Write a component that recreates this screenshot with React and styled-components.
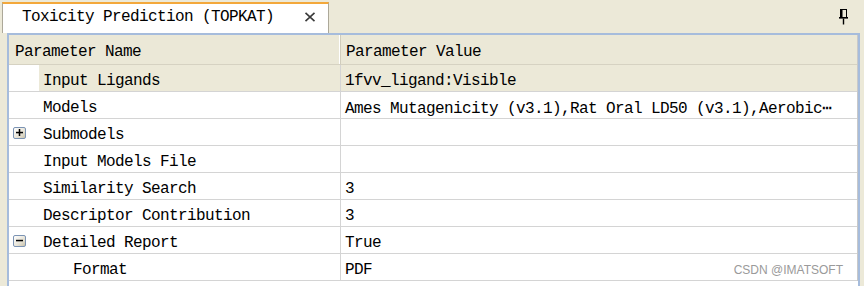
import React from "react";
import styled, { createGlobalStyle } from "styled-components";

const Global = createGlobalStyle`
  html, body { margin: 0; padding: 0; }
  body {
    background: #ece9d8;
    width: 864px;
    height: 286px;
    overflow: hidden;
    font-family: "Liberation Mono", "Courier New", monospace;
  }
`;

const Frame = styled.div`
  width: 864px;
  height: 286px;
  display: flex;
  flex-direction: column;
  position: relative;
`;

const TabStrip = styled.div`
  height: 33px;
  display: flex;
  align-items: flex-end;
  padding-left: 2px;
  padding-right: 16px;
  box-sizing: border-box;
`;

const Tab = styled.div`
  width: 327px;
  height: 31px;
  box-sizing: border-box;
  background: #ffffff;
  border-top: 2px solid #f3a83b;
  border-left: 1px solid #aca899;
  border-right: 1px solid #aca899;
  display: flex;
  align-items: center;
  padding-left: 19px;
  padding-right: 12px;
  padding-bottom: 3px;
  font-size: 16px;
  letter-spacing: -0.6px;
  color: #000;
`;

const TabTitle = styled.span`
  flex: 1;
  white-space: nowrap;
`;

const Spacer = styled.div`
  flex: 1;
`;

const PinBox = styled.div`
  align-self: center;
  display: flex;
  margin-top: 0px;
`;

const Panel = styled.div`
  margin-left: 7px;
  width: 853px;
  flex: 1;
  box-sizing: border-box;
  border: 2px solid #a6bcdc;
  border-bottom: none;
  background: #ffffff;
  display: flex;
  flex-direction: column;
`;

const Grid = styled.div`
  display: grid;
  grid-template-columns: 30px 302px 1fr;
  border-right: 1px solid #c9c9c9;
`;

const HeadCell = styled.div`
  grid-column: ${(p) => p.$span};
  height: 30px;
  box-sizing: border-box;
  background: #ebe8d7;
  border-bottom: 1px solid #d6d2c2;
  border-right: ${(p) => (p.$divider ? "1px solid #d0ccbc" : "none")};
  box-shadow: ${(p) => (p.$divider ? "inset -1px 0 0 #ffffff" : "none")};
  display: flex;
  align-items: center;
  padding-top: 5px;
  padding-left: ${(p) => p.$pad}px;
  font-size: 16px;
  letter-spacing: -0.6px;
  color: #000;
  white-space: nowrap;
`;

const Gutter = styled.div`
  height: 27px;
  box-sizing: border-box;
  border-bottom: 1px solid #d4d4d4;
  background: #ffffff;
  display: flex;
  align-items: center;
  padding-left: 4px;
  padding-top: 1px;
`;

const Cell = styled.div`
  height: 27px;
  box-sizing: border-box;
  border-bottom: 1px solid #d4d4d4;
  border-right: ${(p) => (p.$divider ? "1px solid #d4d4d4" : "none")};
  background: ${(p) => (p.$selected ? "#ece9d8" : "#ffffff")};
  display: flex;
  align-items: center;
  padding-top: 6px;
  padding-left: ${(p) => p.$pad}px;
  font-size: 16px;
  letter-spacing: -0.6px;
  color: #000;
  white-space: nowrap;
  overflow: hidden;
`;

const Toggle = styled.div`
  width: 13px;
  height: 12px;
  box-sizing: border-box;
  border: 1px solid #7b93b3;
  border-radius: 2px;
  background: linear-gradient(135deg, #ffffff 0%, #e7e3d6 60%, #c9c2ab 100%);
  display: flex;
  align-items: center;
  justify-content: center;
`;

const Watermark = styled.div`
  position: absolute;
  right: 21px;
  bottom: 9px;
  font-family: "Liberation Sans", Arial, sans-serif;
  font-size: 12px;
  color: #9a9a9a;
`;

const ToggleIcon = ({ open }) => (
  <Toggle>
    <svg width="7" height="7" viewBox="0 0 7 7">
      <rect x="0" y="2.8" width="7" height="1.5" fill="#000" />
      {!open && <rect x="2.75" y="0" width="1.5" height="7" fill="#000" />}
    </svg>
  </Toggle>
);

const CloseIcon = () => (
  <svg width="12" height="10" viewBox="0 0 12 10">
    <path d="M1.5 0.8 L10.5 9.2 M10.5 0.8 L1.5 9.2" stroke="#3a3a3a" strokeWidth="1.6" fill="none" />
  </svg>
);

const PinIcon = () => (
  <svg width="9" height="16" viewBox="0 0 9 16">
    <rect x="1.5" y="0.5" width="6" height="8" fill="none" stroke="#000" strokeWidth="1" />
    <rect x="1.5" y="0.5" width="2" height="8" fill="#000" />
    <rect x="0" y="8" width="9" height="1.6" fill="#000" />
    <rect x="3.8" y="9.5" width="1.4" height="6" fill="#000" />
  </svg>
);

const rows = [
  { name: "Input Ligands", value: "1fvv_ligand:Visible", selected: true },
  { name: "Models", value: "Ames Mutagenicity (v3.1),Rat Oral LD50 (v3.1),Aerobic\u22ef" },
  { name: "Submodels", value: "", toggle: "closed" },
  { name: "Input Models File", value: "" },
  { name: "Similarity Search", value: "3" },
  { name: "Descriptor Contribution", value: "3" },
  { name: "Detailed Report", value: "True", toggle: "open" },
  { name: "Format", value: "PDF", indent: true },
];

export default function App() {
  return (
    <Frame>
      <Global />
      <TabStrip>
        <Tab>
          <TabTitle>Toxicity Prediction (TOPKAT)</TabTitle>
          <CloseIcon />
        </Tab>
        <Spacer />
        <PinBox>
          <PinIcon />
        </PinBox>
      </TabStrip>
      <Panel>
        <Grid>
          <HeadCell $span="1 / 3" $pad={6} $divider>
            Parameter Name
          </HeadCell>
          <HeadCell $span="3 / 4" $pad={5}>
            Parameter Value
          </HeadCell>
          {rows.map((r) => (
            <React.Fragment key={r.name}>
              <Gutter>{r.toggle && <ToggleIcon open={r.toggle === "open"} />}</Gutter>
              <Cell $pad={r.indent ? 34 : 4} $divider $selected={r.selected}>
                {r.name}
              </Cell>
              <Cell $pad={4} $selected={r.selected}>
                {r.value}
              </Cell>
            </React.Fragment>
          ))}
        </Grid>
      </Panel>
      <Watermark>CSDN @IMATSOFT</Watermark>
    </Frame>
  );
}
